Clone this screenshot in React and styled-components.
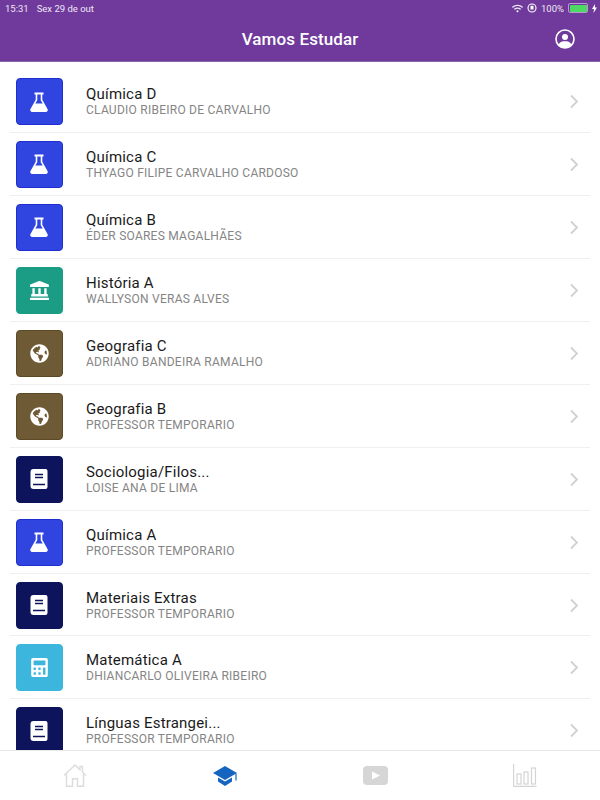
import React from "react";
import styled, { createGlobalStyle } from "styled-components";
import { FaLandmark, FaGlobeAmericas, FaCalculator, FaWifi } from "react-icons/fa";

const Global = createGlobalStyle`
  html, body { margin: 0; padding: 0; background: #fff; }
  body { font-family: Roboto, "Liberation Sans", sans-serif; }
`;

const Screen = styled.div`
  width: 600px; height: 800px; display: flex; flex-direction: column; overflow: hidden; background: #fff;
`;
const Header = styled.header`
  position: relative; flex: 0 0 62px; height: 62px; background: #6f3a9b; color: #fff;
  box-sizing: border-box; border-bottom: 1px solid #8a66ab;
  display: flex; align-items: center; justify-content: center; padding-top: 16px;
`;
const Title = styled.h1`
  margin: 0; font-size: 17px; font-weight: 500; letter-spacing: 0.1px;
`;
const StatusBar = styled.div`
  position: absolute; top: 0; left: 5px; right: 3px; height: 16px;
  display: flex; align-items: center; justify-content: space-between;
  font-size: 9.5px; color: #efe8f5;
`;
const StatusGroup = styled.div`
  display: flex; align-items: center; gap: ${p => p.$gap}px;
`;
const Battery = styled.span`
  width: 17px; height: 7px; border: 1px solid #b79bd0; border-radius: 2px; padding: 0.5px; display: flex;
  &::before { content: ""; flex: 1; background: #4cd964; border-radius: 1px; }
`;
const ProfileButton = styled.div`
  position: absolute; right: 25px; top: 29px; width: 20px; height: 20px; display: flex;
`;
const List = styled.main`
  flex: 1; min-height: 0; overflow: hidden; padding: 8px 10px 0;
`;
const Row = styled.div`
  height: 62.94px; box-sizing: border-box; padding: 8px 0 8px 5.5px; display: flex; align-items: flex-start;
  border-bottom: 1px solid #efefef; flex-shrink: 0;
`;
const IconTile = styled.div`
  width: 47px; height: 47px; flex: 0 0 47px; border-radius: 4px; background: ${p => p.$bg};
  box-sizing: border-box; border: 1px solid ${p => p.$edge};
  display: flex; align-items: center; justify-content: center; color: #fff;
`;
const TextCol = styled.div`
  flex: 1; margin-left: 23.5px; padding-top: 8px; min-width: 0;
`;
const ItemTitle = styled.div`
  font-size: 15px; line-height: 17px; color: #1a1a1a; letter-spacing: 0.2px;
`;
const ItemSub = styled.div`
  font-size: 12px; line-height: 15px; color: #858585; letter-spacing: 0.25px;
`;
const Chevron = styled.svg`
  width: 10px; height: 15px; margin: 16px 11px 0 0; flex-shrink: 0;
`;
const TabBar = styled.nav`
  flex: 0 0 50px; height: 50px; box-sizing: border-box; border-top: 1px solid #e8e8e8; background: #fff;
  display: grid; grid-template-columns: repeat(4, 1fr); justify-items: center; align-items: center;
`;
const Tab = styled.div`
  display: flex;
`;

const Book = ({ bg }) => (
  <svg width="18" height="20" viewBox="0 0 18 20">
    <path d="M3.5 0H15.5a2 2 0 0 1 2 2V18a2 2 0 0 1-2 2H3.5A3 3 0 0 1 .5 17V3A3 3 0 0 1 3.5 0Z" fill="#fff" />
    <path d="M5 5.5H13M5 8.5H13M3 15.5H15" stroke={bg} strokeWidth="1.5" />
  </svg>
);

const Flask = () => (
  <svg width="18" height="20" viewBox="0 0 18 20">
    <path d="M4.5.5h9v2h-1.2v5.2l5.2 9.3a2 2 0 0 1-1.8 3H2.300a2 2 0 0 1-1.800-3l5.200-9.300V2.500H4.500Z" fill="#fff" />
    <path d="M7.300 2.500V8.200L5.300 11.500H12.700L10.700 8.200V2.500Z" fill={"#3045e0"} />
  </svg>
);

const kinds = {
  flask: { bg: "#3045e0", edge: "#1d2fd0", icon: () => <Flask /> },
  bank: { bg: "#1b9c85", edge: "#1b9c85", icon: () => <FaLandmark size={19} /> },
  globe: { bg: "#6e5a34", edge: "#5c4a26", icon: () => <FaGlobeAmericas size={19} /> },
  book: { bg: "#0d145c", edge: "#0d145c", icon: () => <Book bg="#0d145c" /> },
  calc: { bg: "#3cb6dc", edge: "#3cb6dc", icon: () => <FaCalculator size={19} /> },
};

const items = [
  ["flask", "Química D", "CLAUDIO RIBEIRO DE CARVALHO"],
  ["flask", "Química C", "THYAGO FILIPE CARVALHO CARDOSO"],
  ["flask", "Química B", "ÉDER SOARES MAGALHÃES"],
  ["bank", "História A", "WALLYSON VERAS ALVES"],
  ["globe", "Geografia C", "ADRIANO BANDEIRA RAMALHO"],
  ["globe", "Geografia B", "PROFESSOR TEMPORARIO"],
  ["book", "Sociologia/Filos...", "LOISE ANA DE LIMA"],
  ["flask", "Química A", "PROFESSOR TEMPORARIO"],
  ["book", "Materiais Extras", "PROFESSOR TEMPORARIO"],
  ["calc", "Matemática A", "DHIANCARLO OLIVEIRA RIBEIRO"],
  ["book", "Línguas Estrangei...", "PROFESSOR TEMPORARIO"],
];

export default function App() {
  return (
    <Screen>
      <Global />
      <Header>
        <StatusBar>
          <StatusGroup $gap={8}><span>15:31</span><span>Sex 29 de out</span></StatusGroup>
          <StatusGroup $gap={4}>
            <FaWifi size={11} />
            <svg width="10" height="10" viewBox="0 0 10 10"><circle cx="5" cy="5" r="4" fill="none" stroke="#fff" strokeWidth="1.1" /><rect x="3.5" y="2.800" width="3" height="3.700" fill="#fff" /></svg>
            <span>100%</span>
            <Battery />
            <svg width="5" height="9" viewBox="0 0 5 9"><path d="M3 0 0 5h2L1.500 9 5 3.500H3Z" fill="#fff" /></svg>
          </StatusGroup>
        </StatusBar>
        <Title>Vamos Estudar</Title>
        <ProfileButton>
          <svg width="20" height="20" viewBox="0 0 20 20">
            <circle cx="10" cy="10" r="9" fill="none" stroke="#fff" strokeWidth="1.6" />
            <circle cx="10" cy="8" r="3" fill="#fff" />
            <path d="M3.500 15.500C5 12.800 7.500 12.300 10 12.300S15 12.800 16.500 15.500A9 9 0 0 1 10 19 9 9 0 0 1 3.500 15.500Z" fill="#fff" />
          </svg>
        </ProfileButton>
      </Header>
      <List>
        {items.map(([kind, title, sub]) => {
          const k = kinds[kind];
          return (
            <Row key={title}>
              <IconTile $bg={k.bg} $edge={k.edge}>{k.icon()}</IconTile>
              <TextCol>
                <ItemTitle>{title}</ItemTitle>
                <ItemSub>{sub}</ItemSub>
              </TextCol>
              <Chevron viewBox="0 0 10 15"><path d="M2 1.500 8 7.500 2 13.500" fill="none" stroke="#d0d0d0" strokeWidth="1.8" /></Chevron>
            </Row>
          );
        })}
      </List>
      <TabBar>
        <Tab>
          <svg width="24" height="23" viewBox="0 0 24 23" fill="none" stroke="#dcdcdc" strokeWidth="1.4">
            <path d="M1 11.500 12 1l5 4.800V2.500h2.500v5.700L23 11.500" />
            <path d="M3.500 10v12.200h6v-7.500h5v7.500h6V10" />
          </svg>
        </Tab>
        <Tab>
          <svg width="24" height="20" viewBox="0 0 24 20">
            <path d="M12 0 24 7 12 14 0 7Z" fill="#1565c0" />
            <path d="M5 11.500 12 15.500 19 11.500V15.500L12 20 5 15.500Z" fill="#1565c0" />
            <path d="M23 7.500V14.500" stroke="#1565c0" strokeWidth="1.200" />
          </svg>
        </Tab>
        <Tab>
          <svg width="25" height="19" viewBox="0 0 25 19">
            <rect width="25" height="19" rx="4" fill="#d6d6d6" />
            <path d="M9 5.500 17 9.500 9 13.500Z" fill="#fff" />
          </svg>
        </Tab>
        <Tab>
          <svg width="24" height="23" viewBox="0 0 24 23" fill="none" stroke="#d4d4d4" strokeWidth="1.200">
            <path d="M.6 0V22.400H23.500" />
            <rect x="4" y="10" width="4" height="10" />
            <rect x="11" y="8" width="4" height="12" />
            <rect x="18.500" y="4" width="4" height="16" />
          </svg>
        </Tab>
      </TabBar>
    </Screen>
  );
}
